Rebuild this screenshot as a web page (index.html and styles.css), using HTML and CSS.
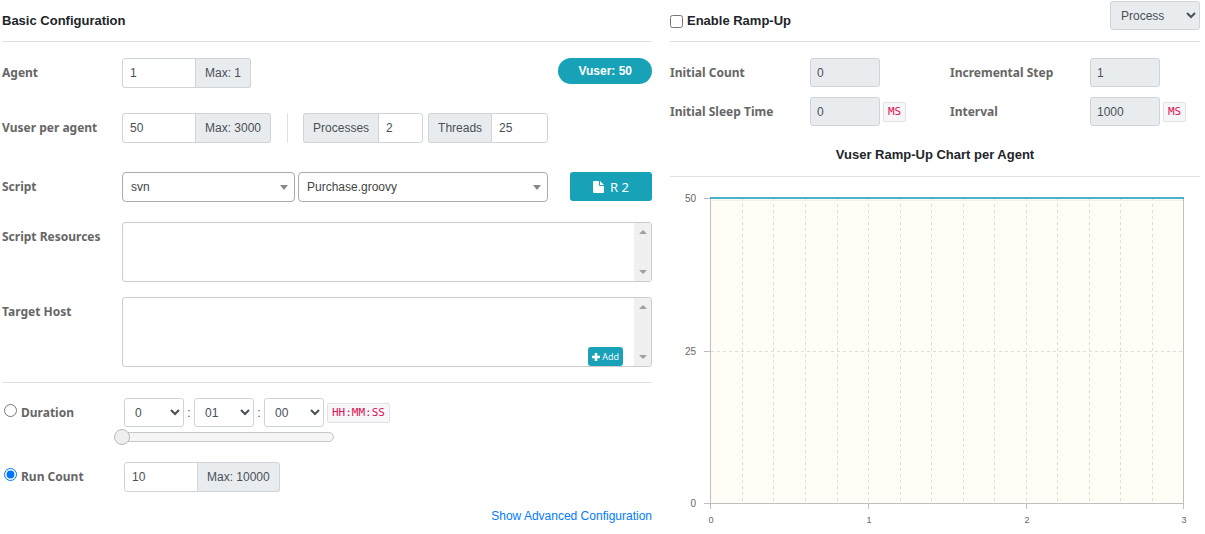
FILE: index.html
```html
<!DOCTYPE html>
<html lang="en">
<head>
<meta charset="utf-8">
<title>Test Configuration</title>
<link rel="stylesheet" href="styles.css">
</head>
<body>
<main class="page">
  <section class="basic">
    <header class="head"><h2 class="title">Basic Configuration</h2></header>

    <div class="row row-agent">
      <label class="name" for="agent">Agent</label>
      <div class="fields">
        <div class="group"><input class="text" id="agent" value="1"><span class="addon addon-end">Max: 1</span></div>
        <span class="pill">Vuser: 50</span>
      </div>
    </div>

    <div class="row row-vuser">
      <label class="name" for="vuser">Vuser per agent</label>
      <div class="fields">
        <div class="group"><input class="text" id="vuser" value="50"><span class="addon addon-end">Max: 3000</span></div>
        <span class="divider"></span>
        <div class="group"><label class="addon addon-start" for="processes">Processes</label><input class="text text-small" id="processes" value="2"></div>
        <div class="group group-next"><label class="addon addon-start" for="threads">Threads</label><input class="text text-medium" id="threads" value="25"></div>
      </div>
    </div>

    <div class="row row-script">
      <label class="name" for="script">Script</label>
      <div class="fields">
        <div class="picker picker-repo"><select id="repo" aria-label="Repository"><option>svn</option></select></div>
        <div class="picker picker-file"><select id="script"><option>Purchase.groovy</option></select></div>
        <button class="revision" type="button">
          <svg width="11" height="12" viewBox="0 0 11 12" aria-hidden="true"><path fill="#fff" d="M0 1Q0 0 1 0H6V4Q6 5 7 5H11V11Q11 12 10 12H1Q0 12 0 11ZM7 0L11 4H7Z"/></svg>
          <span>R 2</span>
        </button>
      </div>
    </div>

    <div class="row row-resources">
      <span class="name name-top">Script Resources</span>
      <div class="box box-resources">
        <div class="rail"><span class="arrow arrow-up"></span><span class="arrow arrow-down"></span></div>
      </div>
    </div>

    <div class="row row-host">
      <span class="name name-top">Target Host</span>
      <div class="box box-host">
        <button class="add" type="button"><svg width="8" height="8" viewBox="0 0 8 8" aria-hidden="true"><path fill="#fff" d="M2.7 0H5.3V2.7H8V5.3H5.3V8H2.7V5.3H0V2.7H2.7Z"/></svg>Add</button>
        <div class="rail"><span class="arrow arrow-up"></span><span class="arrow arrow-down"></span></div>
      </div>
    </div>

    <div class="limits">
      <div class="limit">
        <div class="choice"><input class="radio" type="radio" name="limit" id="duration"><label class="name" for="duration">Duration</label></div>
        <div class="time">
          <div class="clock">
            <select class="select" aria-label="Hours"><option>0</option></select>
            <span class="colon">:</span>
            <select class="select" aria-label="Minutes"><option>01</option></select>
            <span class="colon">:</span>
            <select class="select" aria-label="Seconds"><option>00</option></select>
            <code class="unit">HH:MM:SS</code>
          </div>
          <input class="slider" type="range" min="0" max="100" value="0" aria-label="Duration">
        </div>
      </div>
      <div class="limit limit-count">
        <div class="choice"><input class="radio" type="radio" name="limit" id="count" checked><label class="name" for="count">Run Count</label></div>
        <div class="group"><input class="text" aria-label="Run Count" value="10"><span class="addon addon-end">Max: 10000</span></div>
      </div>
    </div>
    <div class="more"><a href="#">Show Advanced Configuration</a></div>
  </section>

  <section class="rampup">
    <header class="head head-rampup">
      <input class="check" type="checkbox" id="ramp"><label class="title" for="ramp">Enable Ramp-Up</label>
      <select class="select select-type" aria-label="Ramp-up type" disabled><option>Process</option></select>
    </header>
    <div class="settings">
      <label class="name" for="initial">Initial Count</label>
      <div class="cell"><input class="number" id="initial" value="0" disabled></div>
      <label class="name" for="step">Incremental Step</label>
      <div class="cell"><input class="number" id="step" value="1" disabled></div>
      <label class="name" for="sleep">Initial Sleep Time</label>
      <div class="cell"><input class="number" id="sleep" value="0" disabled><code class="unit">MS</code></div>
      <label class="name" for="interval">Interval</label>
      <div class="cell"><input class="number" id="interval" value="1000" disabled><code class="unit">MS</code></div>
    </div>
    <h3 class="title chart-title">Vuser Ramp-Up Chart per Agent</h3>
    <svg class="chart" viewBox="0 0 530 352" role="img" aria-label="Vuser ramp-up chart">
      <rect x="40" y="21" width="474" height="306" fill="#fffdf6"/>
      <path class="grid" d="M72.5 21V326M103.5 21V326M135.5 21V326M167.5 21V326M198.5 21V326M230.5 21V326M261.5 21V326M293.5 21V326M324.5 21V326M356.5 21V326M387.5 21V326M419.5 21V326M450.5 21V326M482.5 21V326M41 174.5H513"/>
      <path class="axis" d="M34 21.5H40M34 174.5H40M34 326.5H514M40.5 21V332M198.5 327V332M356.5 327V332M513.5 21V332"/>
      <path class="shade" d="M41 23.5H513"/>
      <path class="series" d="M40 21H514"/>
      <g class="ticks ticks-y"><text x="26" y="25">50</text><text x="26" y="178">25</text><text x="26" y="330">0</text></g>
      <g class="ticks ticks-x"><text x="41" y="346">0</text><text x="199" y="346">1</text><text x="357" y="346">2</text><text x="514" y="346">3</text></g>
    </svg>
  </section>
</main>
</body>
</html>
```
FILE: styles.css
```css
* { box-sizing: border-box; }

body {
  margin: 0;
  background: #fff;
  color: #495057;
  font: 12px/18px "Liberation Sans", Arial, sans-serif;
}

input, select, button { font: inherit; color: inherit; margin: 0; }

.page {
  display: grid;
  grid-template-columns: 650fr 530fr;
  gap: 18px;
  padding: 0 5px 0 2px;
}

.head {
  display: flex;
  align-items: center;
  height: 42px;
  border-bottom: 1px solid #dee2e6;
}

.title {
  margin: 0;
  color: #212529;
  font-size: 13px;
  font-weight: bold;
  line-height: 18px;
}

.name {
  color: #666;
  font: bold 12px/18px "Noto Sans", sans-serif;
}

.row {
  display: grid;
  grid-template-columns: 120px 1fr;
  align-items: center;
}

.row-agent { margin-top: 16px; }
.row-vuser { margin-top: 25px; }
.row-script { margin-top: 29px; }
.row-resources { margin-top: 20px; }
.row-host { margin-top: 15px; }

.name-top { align-self: start; padding-top: 6px; }

.fields, .group { display: flex; align-items: center; }

.text {
  width: 74px;
  height: 30px;
  padding: 0 7px;
  border: 1px solid #ced4da;
  border-radius: 3px 0 0 3px;
  background: #fff;
}

.addon {
  height: 30px;
  padding: 5px 9px;
  border: 1px solid #ced4da;
  background: #e9ecef;
}

.addon-end { border-left-width: 0; border-radius: 0 3px 3px 0; box-shadow: -1px 0 #ced4da; }
.addon-start { border-right-width: 0; border-radius: 3px 0 0 3px; }
.addon-start + .text { border-radius: 0 3px 3px 0; }
.text-small { width: 45px; }
.text-medium { width: 57px; }
.group-next { margin-left: 5px; }

.divider {
  width: 1px;
  height: 30px;
  margin: 0 15px 0 16px;
  background: #dee2e6;
}

.pill {
  margin: -4px 0 0 auto;
  padding: 4px 20px;
  border-radius: 13px;
  background: #17a2b8;
  color: #fff;
  font-weight: bold;
}

.picker { display: grid; align-items: center; }
.picker > select, .picker::after { grid-area: 1 / 1; }
.picker::after {
  content: "";
  justify-self: end;
  margin-right: 7px;
  border: 4px solid transparent;
  border-top: 5px solid #888;
  border-bottom: 0;
  pointer-events: none;
}
.picker > select {
  appearance: none;
  width: 100%;
  height: 30px;
  padding: 0 20px 0 8px;
  border: 1px solid #aaa;
  border-radius: 4px;
  background: #fff;
  color: #444;
}
.picker-repo { width: 173px; margin-right: 3px; }
.picker-file { width: 250px; }

.revision {
  display: flex;
  align-items: center;
  align-self: flex-start;
  justify-content: center;
  gap: 6px;
  width: 82px;
  height: 29px;
  margin-left: auto;
  border: 0;
  border-radius: 3px;
  background: #17a2b8;
  color: #fff;
  font: 13px/18px "Noto Sans", sans-serif;
}

.box {
  position: relative;
  display: flex;
  justify-content: flex-end;
  border: 1px solid #ccc;
  border-radius: 3px;
  overflow: hidden;
}
.box-resources { height: 60px; }
.box-host { height: 70px; }

.rail {
  display: flex;
  flex-direction: column;
  justify-content: space-between;
  align-items: center;
  width: 17px;
  padding: 7px 0;
  background: #f0f0f0;
}
.arrow { border: 4px solid transparent; }
.arrow-up { border-top: 0; border-bottom-color: #a0a0a0; }
.arrow-down { border-bottom: 0; border-top-color: #a0a0a0; }

.add {
  position: absolute;
  right: 28px;
  bottom: 0;
  display: flex;
  align-items: center;
  gap: 2px;
  height: 19px;
  padding: 0 4px;
  border: 0;
  border-radius: 3px;
  background: #17a2b8;
  color: #fff;
  font: 9px/18px "Open Sans", sans-serif;
}

.limits {
  margin-top: 15px;
  padding-top: 15px;
  border-top: 1px solid #dee2e6;
}
.limit {
  display: grid;
  grid-template-columns: 122px 1fr;
  align-items: start;
}
.limit-count { margin-top: 17px; }
.choice { display: flex; align-items: flex-start; padding: 6px 0 0 2px; }
.choice .name { margin-left: 4px; }
.radio { width: 13px; height: 13px; accent-color: #0075ff; }

.clock { display: flex; align-items: center; }
.colon { width: 10px; text-align: center; }

.select {
  width: 60px;
  height: 29px;
  padding: 0 0 0 6px;
  border: 1px solid #ced4da;
  border-radius: 3px;
  background: #fff;
}
.select:disabled, .number:disabled { background: #e9ecef; color: #495057; opacity: 1; }

.unit {
  margin-left: 3px;
  padding: 0 4px;
  border: 1px solid #e1e1e8;
  border-radius: 2px;
  background: #f7f7f9;
  color: #dd1155;
  font: 11px/18px "DejaVu Sans Mono", monospace;
}

.slider {
  appearance: none;
  display: block;
  width: 212px;
  height: 16px;
  margin: 2px 0 0 -2px;
  background: transparent;
}
.slider::-webkit-slider-runnable-track {
  height: 10px;
  border: 1px solid #c8c8c8;
  border-radius: 5px;
  background: #f5f5f5;
}
.slider::-webkit-slider-thumb {
  appearance: none;
  width: 16px;
  height: 16px;
  margin: -4px 0 0 -9px;
  border: 1px solid #bbb;
  border-radius: 50%;
  background: #eee;
}

.more { margin-top: 15px; text-align: right; }
.more a { color: #007bff; text-decoration: none; }

.check { width: 13px; height: 13px; margin: 2px 4px 0 0; }
.select-type { width: 90px; margin: -10px 0 0 auto; }

.settings {
  display: grid;
  grid-template-columns: 140px 140px 140px 1fr;
  gap: 10px 0;
  align-items: center;
  margin-top: 16px;
}
.cell { display: flex; align-items: center; }
.number {
  width: 70px;
  height: 29px;
  padding: 0 6px;
  border: 1px solid #ced4da;
  border-radius: 3px;
}

.chart-title {
  padding: 20px 0 12px;
  border-bottom: 1px solid #dee2e6;
  text-align: center;
}

.chart { display: block; width: 100%; height: auto; }
.grid { fill: none; stroke: #ddd; stroke-dasharray: 3 3; }
.axis { fill: none; stroke: #bfbfbf; }
.shade { fill: none; stroke: #f0f0ea; }
.series { fill: none; stroke: #4bb2c5; stroke-width: 2px; }
.ticks { fill: #666; font-size: 10px; }
.ticks-y { text-anchor: end; }
.ticks-x { font-size: 9px; text-anchor: middle; }
```
